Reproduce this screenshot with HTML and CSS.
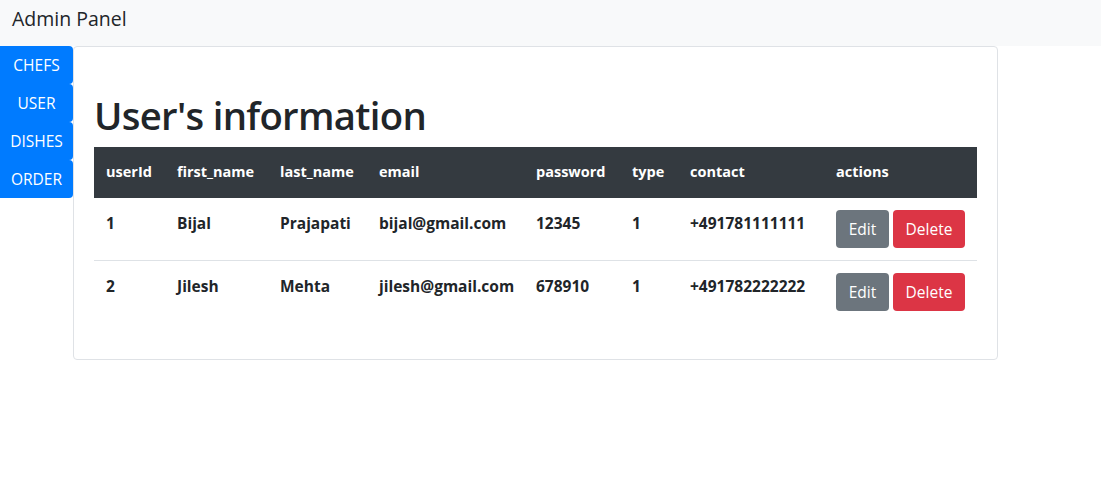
FILE: index.html
```html
<!DOCTYPE html>
<html>
<head>
<meta charset="utf-8">
<link rel="stylesheet" href="styles.css">
<title>Admin Panel</title>
</head>
<body>
<nav class="navbar"><span class="brand">Admin Panel</span></nav>
<div class="layout">
  <div class="sidebar">
    <a class="side-btn">CHEFS</a>
    <a class="side-btn">USER</a>
    <a class="side-btn">DISHES</a>
    <a class="side-btn">ORDER</a>
  </div>
  <div class="card">
    <h1 class="title">User's information</h1>
    <table class="table">
      <colgroup>
        <col class="c1"><col class="c2"><col class="c3"><col class="c4"><col class="c5"><col class="c6"><col class="c7"><col class="c8">
      </colgroup>
      <thead>
        <tr><th>userId</th><th>first_name</th><th>last_name</th><th>email</th><th>password</th><th>type</th><th>contact</th><th>actions</th></tr>
      </thead>
      <tbody>
        <tr><td>1</td><td>Bijal</td><td>Prajapati</td><td>bijal@gmail.com</td><td>12345</td><td>1</td><td>+491781111111</td><td class="actions"><button class="btn edit">Edit</button><button class="btn del">Delete</button></td></tr>
        <tr><td>2</td><td>Jilesh</td><td>Mehta</td><td>jilesh@gmail.com</td><td>678910</td><td>1</td><td>+491782222222</td><td class="actions"><button class="btn edit">Edit</button><button class="btn del">Delete</button></td></tr>
      </tbody>
    </table>
  </div>
</div>
</body>
</html>
```
FILE: styles.css
```css
* { box-sizing: border-box; }
body {
  margin: 0;
  font-family: "Open Sans", "Noto Sans", sans-serif;
  color: #212529;
  background: #fff;
}
.navbar {
  height: 46px;
  background: #f8f9fa;
  display: flex;
  align-items: flex-start;
  padding: 5px 12px 0;
}
.brand {
  font-size: 19.5px;
  line-height: 28px;
  color: #212529;
}
.layout {
  display: flex;
  align-items: flex-start;
}
.sidebar {
  width: 73px;
  display: flex;
  flex-direction: column;
}
.side-btn {
  display: flex;
  align-items: center;
  justify-content: center;
  height: 38px;
  background: #007bff;
  color: #fff;
  font-size: 15.5px;
  border-radius: 0 4px 4px 0;
}
.card {
  width: 925px;
  height: 314px;
  border: 1px solid #dfe2e6;
  border-radius: 4px;
  padding: 44px 20px 20px;
}
.title {
  margin: 0 0 8px;
  font-size: 38.3px;
  font-weight: 600;
  line-height: 48px;
  letter-spacing: -0.7px;
}
.table {
  width: 883px;
  border-collapse: collapse;
  table-layout: fixed;
  font-size: 14.5px;
  font-weight: 700;
}
.c1 { width: 71px; }
.c2 { width: 103px; }
.c3 { width: 99px; }
.c4 { width: 157px; }
.c5 { width: 96px; }
.c6 { width: 58px; }
.c7 { width: 146px; }
.c8 { width: 153px; }
.table th {
  background: #343a40;
  color: #fff;
  text-align: left;
  padding: 12px;
  height: 50px;
  line-height: 24px;
  border-bottom: 2px solid #343a40;
}
.table td {
  padding: 12px;
  vertical-align: top;
  line-height: 26px;
  font-size: 15.5px;
  border-top: 1px solid #dee2e6;
  white-space: nowrap;
}
.table tbody tr:first-child td { border-top: none; }
.table td.actions { display: flex; gap: 4px; }
.btn {
  height: 38px;
  border: none;
  border-radius: 4px;
  color: #fff;
  font-family: inherit;
  font-size: 15.5px;
  font-weight: 400;
  padding: 0 10px;
}
.edit { background: #6c757d; width: 53px; }
.del { background: #dc3545; width: 72px; }
```
